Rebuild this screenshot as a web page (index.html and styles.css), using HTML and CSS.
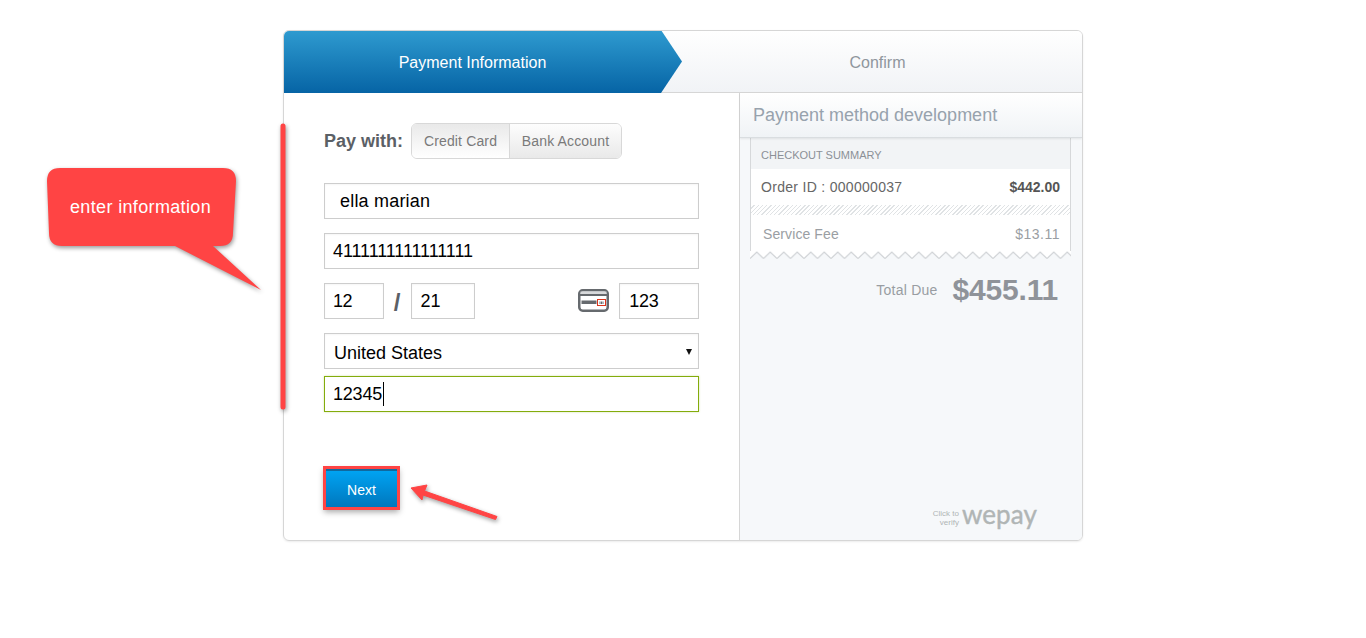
FILE: index.html
```html
<!DOCTYPE html>
<html lang="en">
<head>
<meta charset="utf-8">
<title>Payment Information</title>
<link rel="stylesheet" href="styles.css">
</head>
<body>
<div class="card">
  <div class="steps">
    <div class="step step-active">Payment Information</div>
    <div class="step step-next">Confirm</div>
  </div>
  <div class="main">
    <div class="form">
      <div class="pay-row">
        <span class="pay-label">Pay with:</span>
        <div class="segments">
          <div class="segment segment-on">Credit Card</div>
          <div class="segment">Bank Account</div>
        </div>
      </div>
      <div class="field field-name">ella marian</div>
      <div class="field field-number">4111111111111111</div>
      <div class="expiry-row">
        <div class="field field-month">12</div>
        <span class="slash">/</span>
        <div class="field field-year">21</div>
        <svg class="cvv-icon" width="31" height="23" viewBox="0 0 31 23">
          <rect x="1.250" y="1.250" width="28.500" height="20.500" rx="3.500" fill="#fff" stroke="#666a6e" stroke-width="2.500"/>
          <rect x="2.500" y="2.500" width="26" height="2.500" fill="#d8d9db"/>
          <rect x="2" y="5" width="27" height="2" fill="#666a6e"/>
          <rect x="3.500" y="11.500" width="15" height="3.500" fill="#666a6e"/>
          <rect x="19.500" y="10.500" width="8" height="6" fill="#fff" stroke="#d9341c"/>
          <path d="M22 12.500v2.500M23.500 12.500v2.500M25 12.500v2.500" stroke="#666a6e" fill="none"/>
        </svg>
        <div class="field field-cvv">123</div>
      </div>
      <div class="field field-select">United States<span class="select-arrow"></span></div>
      <div class="field field-zip"><span class="typed">12345</span></div>
      <button class="next" type="button">Next</button>
    </div>
    <div class="side">
      <div class="side-title">Payment method development</div>
      <div class="receipt">
        <div class="receipt-head">CHECKOUT SUMMARY</div>
        <div class="receipt-order"><span class="order-id">Order ID : 000000037</span><b>$442.00</b></div>
        <div class="hatch"></div>
        <div class="receipt-fee"><span>Service Fee</span><span class="fee-value">$13.11</span></div>
        <svg class="zigzag" width="321" height="9" viewBox="0 0 321 9">
          <defs>
            <pattern id="teeth" width="13.500" height="9" patternUnits="userSpaceOnUse">
              <path d="M0 7.500L6.750 1L13.500 7.500V0H0Z" fill="#fff"/>
              <path d="M0 7.500L6.750 1L13.500 7.500" fill="none" stroke="#cfd2d5" stroke-width="1.200"/>
            </pattern>
          </defs>
          <rect width="321" height="9" fill="url(#teeth)"/>
        </svg>
      </div>
      <div class="total"><span class="total-label">Total Due</span><span class="total-value">$455.11</span></div>
      <div class="verify">
        <span class="verify-note">Click to<br>verify</span>
        <span class="verify-logo">wepay</span>
      </div>
    </div>
  </div>
</div>

<svg class="marks" width="1366" height="638" viewBox="0 0 1366 638">
  <g class="marks-group">
    <path d="M283 126V407" stroke="#ff4444" stroke-width="5" stroke-linecap="round" fill="none"/>
    <path d="M60 168H223Q236 168 236 181L233 233Q233 246 220 246H213L261 290L175 246H62Q49 246 49 233L47 181Q47 168 60 168Z" fill="#ff4444"/>
    <path d="M411 488L427 485L424.500 491L497 516.500L495.500 519.500L423 495L422 500Z" fill="#ff4444" stroke="#ff4444" stroke-linejoin="round"/>
  </g>
</svg>
<div class="bubble-text">enter information</div>
</body>
</html>
```
FILE: styles.css
```css
* { box-sizing: border-box; }
html, body { margin: 0; padding: 0; background: #fff; }
body {
  position: relative;
  height: 638px;
  overflow: hidden;
  padding-top: 30px;
  font-family: "Liberation Sans", Arial, sans-serif;
  color: #000;
}
.card {
  width: 800px;
  height: 511px;
  margin: 0 auto;
  border: 1px solid #d6d6d6;
  border-radius: 6px;
  overflow: hidden;
  box-shadow: 0 1px 2px rgba(0,0,0,.08);
  display: flex;
  flex-direction: column;
}
.steps {
  display: flex;
  height: 63px;
  margin: -1px -1px 0;
  background: linear-gradient(#fff, #f1f3f6);
  border-bottom: 1px solid #d6d6d6;
  font-size: 16px;
  line-height: 65px;
  flex: none;
}
.step { height: 63px; text-align: center; }
.step-active {
  flex: 0 0 399px;
  padding-right: 20px;
  color: #fff;
  background: linear-gradient(#2f9bd0, #0664a5);
  clip-path: polygon(0 0, 378px 0, 399px 50%, 378px 100%, 0 100%);
  border-radius: 6px 0 0 0;
}
.step-next { flex: 1; padding-right: 10px; color: #8f969d; }
.main { flex: 1; display: flex; min-height: 0; }
.form { width: 455px; padding: 30px 0 0 40px; flex: none; }
.pay-row { display: flex; align-items: center; height: 36px; margin-bottom: 24px; }
.pay-label { font-size: 18px; font-weight: bold; color: #5b6066; width: 87px; }
.segments {
  display: flex;
  height: 36px;
  border: 1px solid #d8d8d8;
  border-radius: 6px;
  overflow: hidden;
  font-size: 14px;
  letter-spacing: .15px;
  color: #7a7a7a;
  line-height: 34px;
}
.segment {
  width: 111px;
  text-align: center;
  background: linear-gradient(#fdfdfd, #e9e9e9);
}
.segment-on {
  width: 98px;
  background: linear-gradient(#e9e9e9, #fff);
  border-right: 1px solid #d8d8d8;
}
.field {
  height: 36px;
  width: 375px;
  border: 1px solid #cdcdcd;
  padding-left: 8px;
  font-size: 18px;
  line-height: 35px;
  color: #000;
  margin-bottom: 14px;
  background: #fff;
  box-shadow: inset 0 1px 2px rgba(0,0,0,.04);
  position: relative;
}
.field-name { padding-left: 15px; letter-spacing: .2px; }
.field-number { letter-spacing: -.1px; }
.expiry-row { display: flex; width: 375px; height: 36px; margin-bottom: 14px; align-items: flex-start; }
.expiry-row .field { margin: 0; }
.field-month { width: 60px; letter-spacing: -.5px; }
.slash { width: 27px; text-align: center; font-size: 24px; font-weight: bold; line-height: 40px; color: #5b6066; }
.field-year { width: 65px; padding-left: 9px; }
.field-cvv { width: 80px; padding-left: 9px; letter-spacing: -.3px; }
.cvv-icon { margin: 6px 10px 0 103px; flex: none; }
.field-select { padding-left: 9px; margin-bottom: 7px; line-height: 38px; }
.select-arrow {
  position: absolute;
  right: 6px;
  top: 15px;
  border: 3px solid transparent;
  border-top: 6px solid #111;
  border-bottom: 0;
}
.field-zip {
  border-color: #84ac0c;
  box-shadow: 0 0 2px rgba(132,172,12,.35);
  margin-bottom: 0;
  letter-spacing: -.2px;
}
.typed { border-right: 1px solid #000; display: inline-block; height: 24px; line-height: 24px; padding-right: 1px; margin-top: 5px; vertical-align: top; }
.next {
  display: block;
  width: 71px;
  height: 38px;
  margin: 57px 0 0 2px;
  padding: 1px 0 0;
  font: 14px "Liberation Sans", Arial, sans-serif;
  color: #fff;
  border: 0;
  border-top: 2px solid #10699f;
  background: linear-gradient(#00a3f2, #0077bd);
  box-shadow: 0 0 0 3px #ff4444, 0 3px 6px 2px rgba(0,0,0,.35);
}
.side {
  flex: 1;
  border-left: 1px solid #d6d6d6;
  background: #f6f8fa;
  display: flex;
  flex-direction: column;
  min-width: 0;
}
.side-title {
  height: 45px;
  flex: none;
  padding-left: 13px;
  font-size: 18px;
  line-height: 45px;
  color: #97a2ad;
  background: linear-gradient(#fff, #f0f3f6);
  border-bottom: 1px solid #d9dde0;
  box-shadow: 0 1px 2px rgba(0,0,0,.08);
  position: relative;
}
.receipt { margin: 0 0 0 10px; width: 321px; flex: none; }
.receipt-head {
  height: 31px;
  padding-left: 10px;
  font-size: 11px;
  line-height: 34px;
  color: #8b9097;
  background: #f2f4f6;
  border: 1px solid #d6d8da;
  border-width: 0 1px;
}
.receipt-order {
  display: flex;
  justify-content: space-between;
  height: 36px;
  padding: 0 10px;
  font-size: 14px;
  line-height: 36px;
  color: #666;
  background: #fff;
  border: 1px solid #d6d8da;
  border-width: 0 1px;
}
.order-id { letter-spacing: .3px; }
.receipt-order b { color: #555; }
.hatch {
  height: 10px;
  background: repeating-linear-gradient(135deg, #fff 0 2px, #e0e3e5 2px 3px);
  border: 1px solid #d6d8da;
  border-width: 0 1px;
}
.receipt-fee {
  display: flex;
  justify-content: space-between;
  height: 36px;
  padding: 0 10px 0 12px;
  font-size: 14px;
  line-height: 38px;
  letter-spacing: .1px;
  color: #9a9ea3;
  background: #fff;
  border: 1px solid #d6d8da;
  border-width: 0 1px;
}
.fee-value { letter-spacing: .5px; }
.zigzag { display: block; }
.total {
  display: flex;
  justify-content: flex-end;
  align-items: center;
  height: 42px;
  margin-top: 9px;
  padding-right: 24px;
  color: #8f9399;
}
.total-label { font-size: 14px; letter-spacing: .25px; margin-right: 15px; color: #999da2; }
.total-value { font-size: 30px; font-weight: bold; letter-spacing: -.2px; }
.verify {
  margin-top: auto;
  margin-bottom: 12px;
  padding-right: 45px;
  display: flex;
  justify-content: flex-end;
  align-items: flex-end;
  gap: 3px;
  color: #b0b5b5;
}
.verify-note { font-size: 8px; line-height: 9px; text-align: right; margin-bottom: 1px; }
.verify-logo { font-family: Lato, sans-serif; font-size: 26px; line-height: 28px; letter-spacing: .1px; -webkit-text-stroke: .4px #b0b5b5; }
.marks { position: absolute; left: 0; top: 0; pointer-events: none; }
.marks-group { filter: drop-shadow(1px 2px 2px rgba(0,0,0,.4)); }
.bubble-text {
  position: absolute;
  left: 70px;
  top: 197px;
  font-size: 18px;
  letter-spacing: .35px;
  line-height: 21px;
  color: #fff;
}
```
